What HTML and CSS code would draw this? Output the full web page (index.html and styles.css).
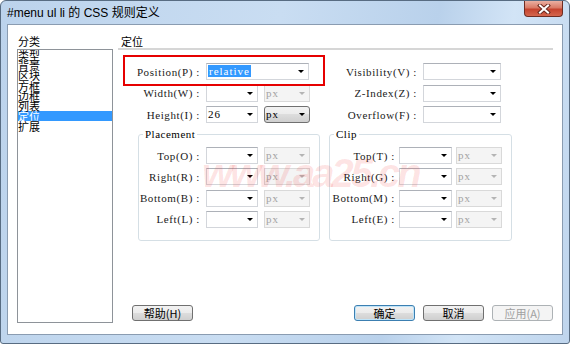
FILE: index.html
```html
<!DOCTYPE html>
<html lang="zh-CN">
<head>
    <meta charset="UTF-8">
    <title>#menu ul li 的 CSS 规则定义</title>
    <link rel="stylesheet" href="styles.css">
</head>
<body>
<div class="window">
    <div class="titlebar">
        <span class="title">#menu ul li 的 CSS 规则定义</span>
        <button class="close-btn" aria-label="关闭">
            <svg width="14" height="10" viewBox="0 0 14 10">
                <path d="M3 1.5 L11 8.5 M11 1.5 L3 8.5" stroke="#6a2a20" stroke-width="4" stroke-linecap="square"/>
                <path d="M3 1.5 L11 8.5 M11 1.5 L3 8.5" stroke="#fff" stroke-width="2" stroke-linecap="square"/>
            </svg>
        </button>
    </div>

    <div class="client">
        <div class="category">
            <div class="cap">分类</div>
            <ul class="list">
                <li>类型</li>
                <li>背景</li>
                <li>区块</li>
                <li>方框</li>
                <li>边框</li>
                <li>列表</li>
                <li class="selected">定位</li>
                <li>扩展</li>
            </ul>
        </div>

        <div class="panel">
            <div class="heading">定位</div>

            <div class="top-form">
                <div class="col col-a">
                    <div class="row">
                        <span class="lbl">Position(P) :</span>
                        <div class="combo long"><span class="val"><span class="hl">relative</span></span><i class="arrow"></i></div>
                    </div>
                    <div class="row">
                        <span class="lbl">Width(W) :</span>
                        <div class="combo short"><span class="val"></span><i class="arrow"></i></div>
                        <div class="combo unit disabled"><span class="val">px</span><i class="arrow"></i></div>
                    </div>
                    <div class="row">
                        <span class="lbl">Height(I) :</span>
                        <div class="combo short"><span class="val">26</span><i class="arrow"></i></div>
                        <div class="combo unit list-style"><span class="val">px</span><i class="arrow"></i></div>
                    </div>
                </div>
                <div class="col col-b">
                    <div class="row">
                        <span class="lbl">Visibility(V) :</span>
                        <div class="combo mid"><span class="val"></span><i class="arrow"></i></div>
                    </div>
                    <div class="row">
                        <span class="lbl">Z-Index(Z) :</span>
                        <div class="combo mid"><span class="val"></span><i class="arrow"></i></div>
                    </div>
                    <div class="row">
                        <span class="lbl">Overflow(F) :</span>
                        <div class="combo mid"><span class="val"></span><i class="arrow"></i></div>
                    </div>
                </div>
            </div>

            <div class="groups">
                <fieldset class="group placement">
                    <legend>Placement</legend>
                    <div class="row">
                        <span class="lbl">Top(O) :</span>
                        <div class="combo short"><span class="val"></span><i class="arrow"></i></div>
                        <div class="combo unit disabled"><span class="val">px</span><i class="arrow"></i></div>
                    </div>
                    <div class="row">
                        <span class="lbl">Right(R) :</span>
                        <div class="combo short"><span class="val"></span><i class="arrow"></i></div>
                        <div class="combo unit disabled"><span class="val">px</span><i class="arrow"></i></div>
                    </div>
                    <div class="row">
                        <span class="lbl">Bottom(B) :</span>
                        <div class="combo short"><span class="val"></span><i class="arrow"></i></div>
                        <div class="combo unit disabled"><span class="val">px</span><i class="arrow"></i></div>
                    </div>
                    <div class="row">
                        <span class="lbl">Left(L) :</span>
                        <div class="combo short"><span class="val"></span><i class="arrow"></i></div>
                        <div class="combo unit disabled"><span class="val">px</span><i class="arrow"></i></div>
                    </div>
                </fieldset>
                <fieldset class="group clip">
                    <legend>Clip</legend>
                    <div class="row">
                        <span class="lbl">Top(T) :</span>
                        <div class="combo short"><span class="val"></span><i class="arrow"></i></div>
                        <div class="combo unit disabled"><span class="val">px</span><i class="arrow"></i></div>
                    </div>
                    <div class="row">
                        <span class="lbl">Right(G) :</span>
                        <div class="combo short"><span class="val"></span><i class="arrow"></i></div>
                        <div class="combo unit disabled"><span class="val">px</span><i class="arrow"></i></div>
                    </div>
                    <div class="row">
                        <span class="lbl">Bottom(M) :</span>
                        <div class="combo short"><span class="val"></span><i class="arrow"></i></div>
                        <div class="combo unit disabled"><span class="val">px</span><i class="arrow"></i></div>
                    </div>
                    <div class="row">
                        <span class="lbl">Left(E) :</span>
                        <div class="combo short"><span class="val"></span><i class="arrow"></i></div>
                        <div class="combo unit disabled"><span class="val">px</span><i class="arrow"></i></div>
                    </div>
                </fieldset>
            </div>

            <div class="buttons">
                <button class="btn help">帮助(H)</button>
                <button class="btn default">确定</button>
                <button class="btn">取消</button>
                <button class="btn" disabled>应用(A)</button>
            </div>

            <!-- annotation box and watermark sit over the form -->
            <div class="callout"></div>
            <div class="watermark">www.aa25.cn</div>
        </div>
    </div>
</div>
</body>
</html>
```

FILE: styles.css
```css
body {
    margin: 0;
    background: #fff;
}

.window {
    width: 570px;
    height: 344px;
    box-sizing: border-box;
    border: 1px solid #586c82;
    border-radius: 6px 6px 3px 3px;
    background: linear-gradient(100deg, #bcd3ec 0%, #c9ddf2 45%, #b9d1eb 70%, #d2e4f6 82%, #bfd5ed 100%);
    display: flex;
    flex-direction: column;
    overflow: hidden;
}

.titlebar {
    height: 23px;
    display: flex;
    align-items: flex-start;
    padding-left: 6px;
}

.title {
    margin-top: 6px;
    font-family: "Liberation Sans", "Noto Sans CJK SC", sans-serif;
    font-size: 12px;
    line-height: 13px;
    color: #000;
}

.close-btn {
    margin-left: auto;
    margin-right: 6px;
    width: 39px;
    height: 16px;
    padding: 0;
    border: 1px solid #6e2c22;
    border-top: none;
    border-radius: 0 0 4px 4px;
    background: linear-gradient(#eab0a2 0%, #d97a66 45%, #c5432e 55%, #d4664e 100%);
    display: flex;
    align-items: center;
    justify-content: center;
}

.client {
    flex: 1;
    margin: 0 6px 8px;
    padding: 9px 9px 11px 9px;
    border: 1px solid #8a9cb1;
    background: #fff;
    display: flex;
}

/* left category list */
.category {
    width: 96px;
    display: flex;
    flex-direction: column;
}

.cap {
    font-family: "Noto Sans CJK SC", sans-serif;
    font-size: 11px;
    line-height: 15px;
    padding-left: 1px;
}

.list {
    flex: 1;
    margin: 0;
    padding: 0;
    list-style: none;
    border: 1px solid #8e9399;
}

.list li {
    height: 10.2px;
    font-family: "Noto Sans CJK SC", sans-serif;
    font-size: 11px;
    line-height: 10px;
    white-space: nowrap;
}

.list li.selected {
    background: #3399ff;
    color: #fff;
}

/* right panel */
.panel {
    flex: 1;
    margin-left: 5px;
    display: flex;
    flex-direction: column;
    position: relative;
}

.heading {
    font-family: "Noto Sans CJK SC", sans-serif;
    font-size: 11px;
    line-height: 14px;
    padding-left: 3px;
    border-bottom: 2px solid #d6d6d6;
}

.top-form {
    display: flex;
    margin-top: 13px;
}

.col {
    display: flex;
    flex-direction: column;
    gap: 4.5px;
}

.row {
    display: flex;
    align-items: center;
    height: 17px;
}

.lbl {
    margin-right: 6px;
    text-align: right;
    white-space: nowrap;
    font-family: "Liberation Serif", serif;
    font-size: 11px;
    letter-spacing: 0.6px;
    color: #1a1a1a;
}

.col-a .lbl { width: 82px; }
.col-b .lbl { width: 107px; }

.combo {
    height: 17px;
    box-sizing: border-box;
    border: 1px solid #d3d6db;
    border-top-color: #adb1b8;
    background: #fff;
    display: flex;
    align-items: center;
}

.combo.short { width: 52px; margin-right: 6px; }
.combo.long { width: 103px; }
.combo.mid { width: 78px; }
.combo.unit { width: 46px; }

.val {
    flex: 1;
    padding-left: 1px;
    font-family: "Liberation Serif", serif;
    font-size: 11px;
    line-height: 13px;
    letter-spacing: 1px;
    white-space: nowrap;
}

.hl {
    background: #3399ff;
    color: #fff;
    padding: 0 1px;
}

.arrow {
    width: 0;
    height: 0;
    margin-right: 4px;
    border-left: 3px solid transparent;
    border-right: 3px solid transparent;
    border-top: 3px solid #000;
}

.combo.disabled {
    background: #f4f4f4;
    border-color: #d9d9d9;
}

.combo.disabled .val { color: #a3a3a3; }
.combo.disabled .arrow { border-top-color: #b4b4b4; }

.combo.list-style {
    border: 1px solid #707070;
    border-radius: 3px;
    background: linear-gradient(#f2f2f2 0%, #ebebeb 50%, #dddddd 50%, #cfcfcf 100%);
}

/* placement / clip groups */
.groups {
    display: flex;
    gap: 9px;
    margin-top: 5px;
    padding-left: 20px;
}

.group {
    margin: 0;
    padding: 7px 0 12px;
    min-width: 0;
    border: 1px solid #d5dfe5;
    border-radius: 3px;
    display: flex;
    flex-direction: column;
    gap: 4.3px;
}

.group legend {
    margin-left: 4px;
    padding: 0 2px;
    font-family: "Liberation Serif", serif;
    font-size: 11px;
    line-height: 12px;
    letter-spacing: 0.5px;
}

.placement { width: 180px; }
.clip { width: 181px; }

.placement .lbl { width: 61px; }
.clip .lbl { width: 65px; margin-right: 4px; }
.clip .combo.short { width: 53px; margin-right: 4px; }

/* dialog buttons */
.buttons {
    margin-top: auto;
    margin-bottom: 2px;
    padding-left: 14px;
    display: flex;
    gap: 8px;
}

.btn {
    width: 61px;
    height: 16px;
    padding: 0;
    border: 1px solid #707070;
    border-radius: 3px;
    background: linear-gradient(#f2f2f2 0%, #ebebeb 50%, #dddddd 50%, #cfcfcf 100%);
    font-family: "Noto Sans CJK SC", sans-serif;
    font-size: 11px;
    line-height: 14px;
    color: #000;
}

.btn.help { margin-right: auto; }

.btn.default {
    border-color: #3c7fb1;
    box-shadow: inset 0 0 0 1px #bfe4f9;
}

.btn:disabled {
    border-color: #adb2b5;
    background: #f4f4f4;
    color: #a0a0a0;
}

.callout {
    position: absolute;
    left: 5px;
    top: 21px;
    width: 202px;
    height: 31px;
    box-sizing: border-box;
    border: 2px solid #e60000;
    pointer-events: none;
}

.watermark {
    position: absolute;
    left: 84px;
    top: 119px;
    font-family: "Liberation Sans", sans-serif;
    font-style: italic;
    font-weight: bold;
    font-size: 40px;
    line-height: 40px;
    letter-spacing: -3px;
    color: rgba(240, 40, 40, 0.13);
    white-space: nowrap;
    pointer-events: none;
}
```
